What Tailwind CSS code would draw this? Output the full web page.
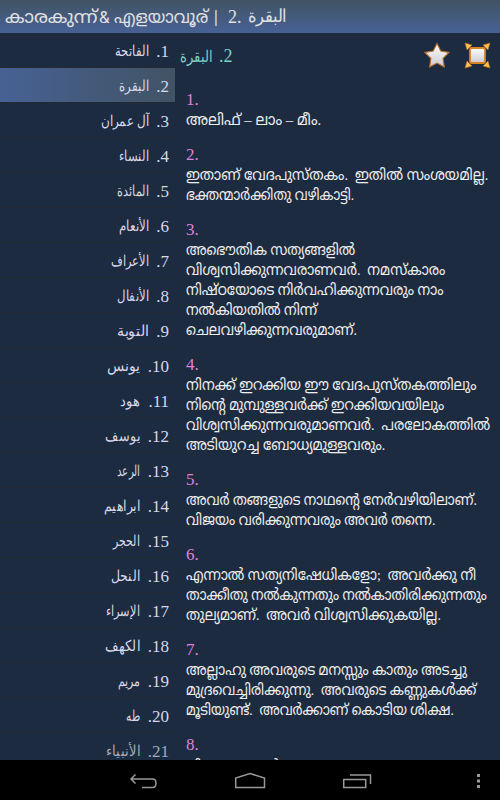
<!DOCTYPE html>
<html lang="ml">
<head>
<meta charset="utf-8">
<title>Al-Baqara</title>
<script src="https://cdn.jsdelivr.net/npm/@tailwindcss/browser@4"></script>
</head>
<body class="w-[500px] h-[800px] overflow-hidden flex flex-col bg-[#1d2b40] font-['Liberation_Serif','Noto_Sans_Malayalam','Manjari','Meera','Noto_Sans',sans-serif]">
<header class="h-[33px] shrink-0 flex items-center pl-[5px] pt-[2px] text-[18px] leading-[31px] whitespace-nowrap text-[#e0e0e0] bg-linear-to-b from-[#415364] to-[#476195]">
<div class="w-[94px]"><span class="inline-block origin-left" data-w="92">കാരകുന്ന്</span></div>
<div class="w-[15px] font-['Roboto'] text-[17px]">&amp;</div>
<div class="w-[100px]"><span class="inline-block origin-left" data-w="94">എളയാവൂര്</span></div>
<div class="w-[14px] text-[17px] font-bold -mt-[2px]">|</div>
<div class="w-[20px] text-[18px]">2.</div>
<div dir="ltr" class="w-[40px] -mt-[3px]"><span dir="rtl" lang="ar" class="inline-block origin-left text-[18px]" data-w="39">البقرة</span></div>
</header>
<div class="flex h-[727px] overflow-hidden">
<nav id="list" class="w-[175px] shrink-0 text-[#d8d8ea] text-[17px]"></nav>
<main class="flex-1 min-w-0">
<div class="h-[57px] flex">
<h1 class="w-[58px] shrink-0 flex pl-[5px] pt-[8px] text-[18px] leading-[30px] text-[#7ececa] whitespace-nowrap"><span class="w-[39px] shrink-0"><span dir="rtl" lang="ar" class="inline-block origin-left text-[16px]" data-w="32">البقرة</span></span><span dir="rtl" class="shrink-0">2.</span></h1>
<svg class="ml-[190px] mt-[8px] w-[76px] h-[30px] shrink-0" viewBox="423 41 76 30">
<defs><linearGradient id="s" x2="0" y2="1"><stop stop-color="#fff"/><stop offset="1" stop-color="#c9c9d1"/></linearGradient></defs>
<path d="M437 43.500l3.800 7.600 8.200 1.300-6 6 1.300 8.500-7.300-3.800-7.400 3.800 1.300-8.500-6-6 8.300-1.300z" fill="url(#s)" stroke="#b66c25" stroke-width="1.1"/>
<path d="M465 43l7 2-5 5zM490 43l-7 2 5 5zM465 68l7-2-5-5zM490 68l-7-2 5-5z" fill="#ffc04c" stroke="#b96820" stroke-width=".6"/>
<rect x="470" y="48" width="15" height="15" rx="1.500" fill="url(#s)" stroke="#d88324" stroke-width="1.8"/>
</svg>
</div>
<div id="verses" class="pl-[11px] text-[17px] leading-[20px] text-[#eee] whitespace-nowrap"></div>
</main>
</div>
<footer class="h-[40px] shrink-0 bg-black">
<svg class="w-[500px] h-[40px]" viewBox="0 760 500 40" fill="none" stroke="#999" stroke-width="1.500">
<path d="M135.500 774.500l-4.500 4.500 4.500 4.500M131 779h21.500q3.500 0 3.500 4.200t-3.500 4.200h-10.500M235.700 787.500v-9.500l14.300-4.500 14.500 4.500v9.500zM343.700 779.500h22v8h-22zM350 775h20.500v9"/>
<path d="M477 774h3v3h-3zM477 779.500h3v3h-3zM477 785h3v3h-3z" fill="#999" stroke="none"/>
</svg>
</footer>
<script>
const suras = [["الفاتحة",34],["البقرة",30],["آل عمران",48],["النساء",30],["المائدة",32],["الأنعام",30],["الأعراف",38],["الأنفال",32],["التوبة",32],["يونس",33],["هود",20],["يوسف",35],["الرعد",23],["ابراهيم",36],["الحجر",27],["النحل",29],["الإسراء",34],["الكهف",35],["مريم",22],["طه",14],["الأنبياء",34]];
document.getElementById("list").innerHTML = suras.map(([s, w], i) =>
 `<div class="h-[35px] pt-[3px] border-b border-[#222a34] flex justify-end items-center pr-[6px] whitespace-nowrap ${i === 1 ? "bg-linear-to-r from-[#476195] to-[#415364]" : ""} ${i === 20 ? "text-[#a4a8b8]" : ""}"><span dir="rtl" lang="ar" class="inline-block origin-right text-[15px]" data-w="${w}">${s}</span><span dir="rtl" class="${i < 9 ? "w-[20px]" : "w-[29px]"}">${i + 1}.</span></div>`).join("");
const verses = [
 [["അലിഫ് – ലാം – മീം.",135]],
 [["ഇതാണ് വേദപുസ്‌തകം.&nbsp; ഇതില്‍ സംശയമില്ല.",302],["ഭക്തന്മാര്‍ക്കിതു വഴികാട്ടി.",168]],
 [["അഭൌതിക സത്യങ്ങളില്‍",169],["വിശ്വസിക്കുന്നവരാണവര്‍.&nbsp; നമസ്‌കാരം",259],["നിഷ്‌ഠയോടെ നിര്‍വഹിക്കുന്നവരും നാം",258],["നല്‍കിയതില്‍ നിന്ന്",131],["ചെലവഴിക്കുന്നവരുമാണ്.",171]],
 [["നിനക്ക് ഇറക്കിയ ഈ വേദപുസ്‌തകത്തിലും",291],["നിന്റെ മുമ്പുള്ളവര്‍ക്ക് ഇറക്കിയവയിലും",258],["വിശ്വസിക്കുന്നവരുമാണവര്‍.&nbsp; പരലോകത്തില്‍",304],["അടിയുറച്ച ബോധ്യമുള്ളവരും.",199]],
 [["അവര്‍ തങ്ങളുടെ നാഥന്റെ നേര്‍വഴിയിലാണ്.",291],["വിജയം വരിക്കുന്നവരും അവര്‍ തന്നെ.",249]],
 [["എന്നാല്‍ സത്യനിഷേധികളോ;&nbsp; അവര്‍ക്കു നീ",290],["താക്കീതു നല്‍കുന്നതും നല്‍കാതിരിക്കുന്നതും",301],["തുല്യമാണ്.&nbsp; അവര്‍ വിശ്വസിക്കുകയില്ല.",255]],
 [["അല്ലാഹു അവരുടെ മനസ്സും കാതും അടച്ചു",281],["മുദ്രവെച്ചിരിക്കുന്നു.&nbsp; അവരുടെ കണ്ണുകള്‍ക്ക്",290],["മൂടിയുണ്ട്.&nbsp; അവര്‍ക്കാണ് കൊടിയ ശിക്ഷ.",268]],
 [["ചില ആളുകള്‍ അവകാശപ്പെടുന്നു:",220]]
];
document.getElementById("verses").innerHTML = verses.map((v, i) =>
 `<section class="mb-[15px]"><div class="h-[20px]"><span class="text-[#dd82dd]">${i + 1}.</span></div>${v.map(l => `<div class="h-[20px] w-[304px] text-[15.500px] ${i === 7 ? "pt-[1px]" : ""}"><span class="inline-block origin-left" data-w="${l[1]}">${l[0]}</span></div>`).join("")}</section>`).join("");
const fit = el => { el.style.transform = `scaleX(${el.dataset.w / el.offsetWidth})`; };
const fitAll = () => document.querySelectorAll("[data-w]").forEach(fit);
const watcher = new ResizeObserver(entries => entries.forEach(e => fit(e.target)));
document.querySelectorAll("[data-w]").forEach(el => watcher.observe(el));
addEventListener("load", fitAll);
fitAll();
</script>
</body>
</html>
